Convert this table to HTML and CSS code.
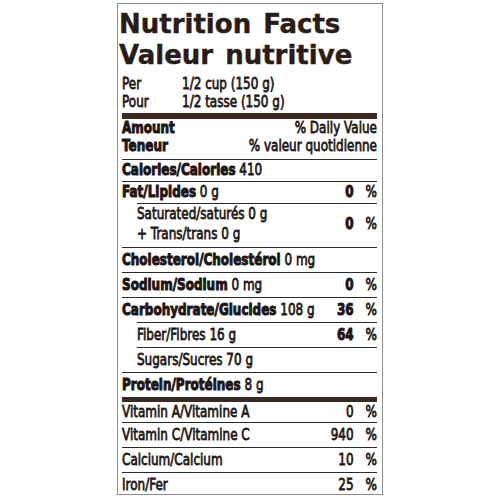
FILE: index.html
```html
<!DOCTYPE html>
<html lang="en">
<head>
    <meta charset="UTF-8">
    <meta name="viewport" content="width=device-width, initial-scale=1.0">
    <title>Nutrition Facts</title>
    <link rel="stylesheet" href="styles.css">
</head>
<body>
    <div class="label">
        <!-- Title -->
        <h1 class="title">Nutrition Facts<br>Valeur nutritive</h1>

        <div class="facts">
            <!-- Serving size -->
            <div class="serving">
                <span>Per</span><span>1/2 cup (150 g)</span>
                <span>Pour</span><span>1/2 tasse (150 g)</span>
            </div>
            <div class="bar"></div>

            <!-- Column headings -->
            <div class="heading">
                <b>Amount</b><span>% Daily Value</span>
                <b>Teneur</b><span>% valeur quotidienne</span>
            </div>

            <!-- Nutrients -->
            <div class="row tight">
                <span><b>Calories/Calories</b> 410</span>
            </div>
            <div class="row tight">
                <span><b>Fat/Lipides</b> 0 g</span>
                <span class="dv"><b>0</b><span class="pc">%</span></span>
            </div>
            <div class="row sub double">
                <span>Saturated/saturés 0 g<br>+ Trans/trans 0 g</span>
                <span class="dv"><b>0</b><span class="pc">%</span></span>
            </div>
            <div class="row">
                <span><b>Cholesterol/Cholestérol</b> 0 mg</span>
            </div>
            <div class="row">
                <span><b>Sodium/Sodium</b> 0 mg</span>
                <span class="dv"><b>0</b><span class="pc">%</span></span>
            </div>
            <div class="row">
                <span><b>Carbohydrate/Glucides</b> 108 g</span>
                <span class="dv"><b>36</b><span class="pc">%</span></span>
            </div>
            <div class="row sub">
                <span>Fiber/Fibres 16 g</span>
                <span class="dv"><b>64</b><span class="pc">%</span></span>
            </div>
            <div class="row sub">
                <span>Sugars/Sucres 70 g</span>
            </div>
            <div class="row">
                <span><b>Protein/Protéines</b> 8 g</span>
            </div>
            <div class="bar thin"></div>

            <!-- Vitamins and minerals -->
            <div class="row plain">
                <span>Vitamin A/Vitamine A</span>
                <span class="dv">0<span class="pc">%</span></span>
            </div>
            <div class="row">
                <span>Vitamin C/Vitamine C</span>
                <span class="dv">940<span class="pc">%</span></span>
            </div>
            <div class="row">
                <span>Calcium/Calcium</span>
                <span class="dv">10<span class="pc">%</span></span>
            </div>
            <div class="row last">
                <span>Iron/Fer</span>
                <span class="dv">25<span class="pc">%</span></span>
            </div>
        </div>
    </div>
</body>
</html>
```

FILE: styles.css
```css
body {
    margin: 0;
    background-color: #fff;
    color: #221814;
    font-family: "DejaVu Sans", sans-serif;
}

.label {
    width: 266px;
    margin: 3px auto 0;
    padding-left: 4px;
    border: 1px solid #8c8c8c;
    box-sizing: border-box;
}

.title {
    margin: 0 0 0 -3px;
    padding-top: 5px;
    font-size: 26px;
    line-height: 31px;
    font-weight: bold;
    word-spacing: 3px;
    color: #2a1c16;
    -webkit-text-stroke: 0.4px #2a1c16;
}

/* the label print is a narrow face, so squeeze the body text */
.facts {
    width: 340px;
    font-size: 16px;
    transform: scaleX(0.75);
    transform-origin: 0 0;
    -webkit-text-stroke: 0.8px #221814;
}

.facts b {
    -webkit-text-stroke: 1px #1a110e;
}

.serving {
    display: grid;
    grid-template-columns: 80px auto;
    margin-top: 4px;
    line-height: 18px;
}

.bar {
    height: 6px;
    margin-top: 2px;
    background-color: #3a2921;
}

.bar.thin {
    height: 5px;
    margin-top: 0;
}

.heading {
    display: grid;
    grid-template-columns: 1fr auto;
    padding-bottom: 4px;
    line-height: 18px;
}

.heading span {
    text-align: right;
}

.row {
    display: flex;
    justify-content: space-between;
    align-items: center;
    padding: 3px 0 4px;
    border-top: 1px solid #2a2a2a;
    line-height: 17px;
}

.row.tight {
    padding: 1px 0 3px;
}

.row.sub {
    margin-left: 20px;
}

.row.double {
    padding: 0 0 3px;
    line-height: 20px;
}

.row.plain {
    padding: 1px 0 2px;
    border-top: none;
}

.row.last {
    padding-bottom: 1px;
}

.pc {
    margin-left: 16px;
    font-weight: normal;
}
```
